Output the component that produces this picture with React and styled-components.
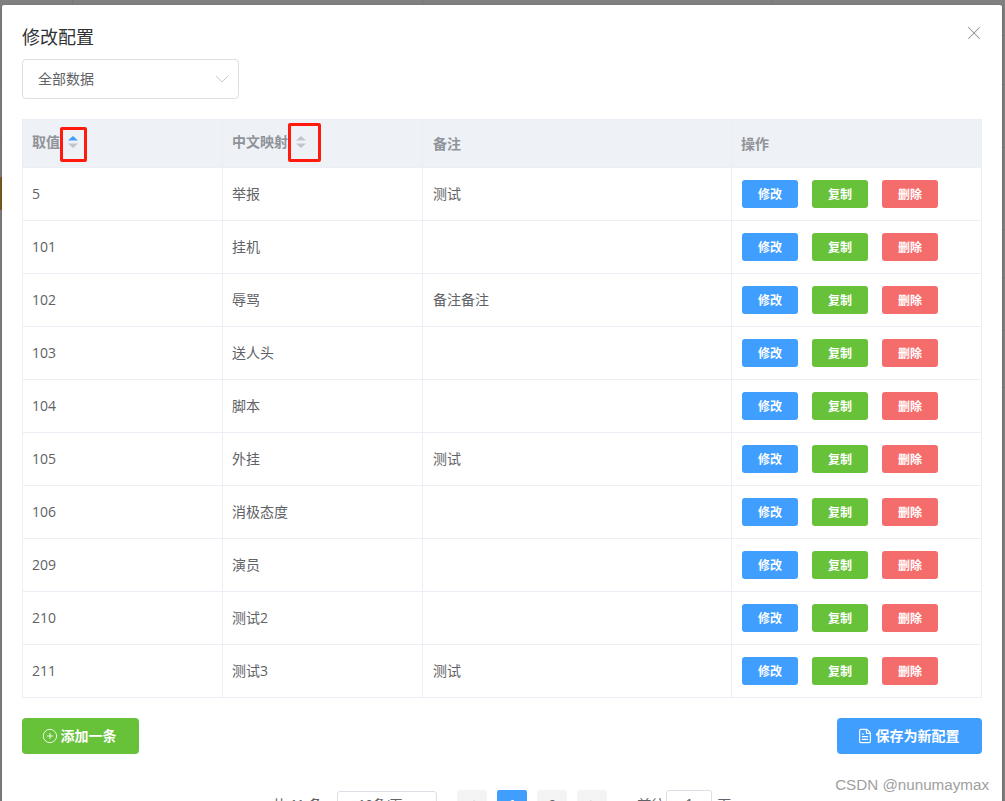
import React from "react";
import styled, { createGlobalStyle } from "styled-components";
import { X, ChevronDown, ChevronLeft, ChevronRight, CirclePlus, FileText } from "lucide-react";

const rows = [
  { value: "5", name: "举报", note: "测试" },
  { value: "101", name: "挂机", note: "" },
  { value: "102", name: "辱骂", note: "备注备注" },
  { value: "103", name: "送人头", note: "" },
  { value: "104", name: "脚本", note: "" },
  { value: "105", name: "外挂", note: "测试" },
  { value: "106", name: "消极态度", note: "" },
  { value: "209", name: "演员", note: "" },
  { value: "210", name: "测试2", note: "" },
  { value: "211", name: "测试3", note: "测试" },
];

// page behind the dimmed overlay only shows as thin lines around the dialog
const backdropLine = (x, y, w, h, color) =>
  `linear-gradient(${color}, ${color}) ${x}px ${y}px / ${w}px ${h}px no-repeat`;

const backdrop = [
  backdropLine(0, 177, 2, 33, "#7a5a20"),
  backdropLine(72, 0, 1, 5, "#75787c"),
  backdropLine(422, 0, 1, 5, "#75787c"),
  backdropLine(772, 0, 1, 5, "#75787c"),
  ...[35, 84, 147, 229, 277, 330, 387].map((y) => backdropLine(1002, y, 3, 1, "#797979")),
  ...[35, 84, 137].map((y) => backdropLine(0, y, 2, 1, "#797979")),
].join(", ");

const SortArrows = ({ active }) => (
  <svg width="10" height="12" viewBox="0 0 10 12">
    <path d="M5 0 L10 4.5 H0 Z" fill={active ? "#409eff" : "#c0c4cc"} />
    <path d="M0 7.5 H10 L5 12 Z" fill="#c0c4cc" />
  </svg>
);

const App = () => {
  return (
    <>
      <GlobalStyle />
      <Page>
        <Dialog>
          <Header>
            <Title>修改配置</Title>
            <Close>
              <X size={22} strokeWidth={1.1} />
            </Close>
          </Header>
          <Select>
            <span>全部数据</span>
            <ChevronDown size={24} strokeWidth={0.9} color="#c0c4cc" />
          </Select>
          <Table>
            <colgroup>
              <col width="200" />
              <col width="200" />
              <col width="309" />
              <col width="250" />
            </colgroup>
            <thead>
              <tr>
                <Th>
                  <HeadCell>
                    取值
                    <Marked $w={27} $h={35} $top={7} $padB={5} $padR={1}>
                      <SortArrows active />
                    </Marked>
                  </HeadCell>
                </Th>
                <Th>
                  <HeadCell>
                    中文映射
                    <Marked $w={33} $h={39} $top={3} $padB={1} $padR={7}>
                      <SortArrows />
                    </Marked>
                  </HeadCell>
                </Th>
                <Th>备注</Th>
                <Th>操作</Th>
              </tr>
            </thead>
            <tbody>
              {rows.map((row) => (
                <tr key={row.value}>
                  <Td>{row.value}</Td>
                  <Td>{row.name}</Td>
                  <Td>{row.note}</Td>
                  <Td>
                    <Actions>
                      <SmallButton $color="#409eff">修改</SmallButton>
                      <SmallButton $color="#67c23a">复制</SmallButton>
                      <SmallButton $color="#f56c6c">删除</SmallButton>
                    </Actions>
                  </Td>
                </tr>
              ))}
            </tbody>
          </Table>
          <FooterBar>
            <BigButton $color="#67c23a" $w={117}>
              <CirclePlus size={16} strokeWidth={1.3} />
              添加一条
            </BigButton>
            <BigButton $color="#409eff" $w={145}>
              <FileText size={16} strokeWidth={1.7} />
              保存为新配置
            </BigButton>
          </FooterBar>
          <Pagination>
            <PagerText>共 11 条</PagerText>
            <SizeSelect>10条/页</SizeSelect>
            <Pages>
              <PageBtn>
                <ChevronLeft size={13} />
              </PageBtn>
              <PageBtn $active>1</PageBtn>
              <PageBtn>2</PageBtn>
              <PageBtn>
                <ChevronRight size={13} />
              </PageBtn>
            </Pages>
            <PagerText>前往</PagerText>
            <JumpInput>1</JumpInput>
            <PagerText>页</PagerText>
          </Pagination>
        </Dialog>
        <Watermark>CSDN @nunumaymax</Watermark>
      </Page>
    </>
  );
};

export default App;

const GlobalStyle = createGlobalStyle`
  html, body {
    margin: 0;
    height: 100%;
    overflow: hidden;
    background: #808080;
  }
  * {
    box-sizing: border-box;
  }
`;

const Page = styled.div`
  position: relative;
  height: 801px;
  overflow: hidden;
  padding: 5px 0 0 2px;
  background: ${backdrop}, #808080;
  font-family: "Liberation Sans", "Noto Sans CJK SC", sans-serif;
`;

const Dialog = styled.div`
  width: 1000px;
  height: 860px;
  padding: 0 20px;
  background: #fff;
  border-radius: 2px;
  box-shadow: 0 1px 3px rgba(0, 0, 0, 0.3);
`;

const Header = styled.div`
  display: flex;
  align-items: center;
  justify-content: space-between;
  height: 54px;
  padding-top: 12px;
`;

const Title = styled.div`
  font-size: 18px;
  line-height: 24px;
  color: #303133;
`;

const Close = styled.div`
  display: flex;
  margin: -10px -3px 0 0;
  color: #909399;
`;

const Select = styled.div`
  display: flex;
  align-items: center;
  justify-content: space-between;
  width: 217px;
  height: 40px;
  padding: 0 4px 0 15px;
  border: 1px solid #dcdfe6;
  border-radius: 4px;
  font-size: 14px;
  color: #606266;

  span {
    margin-bottom: 2px;
  }
`;

const Table = styled.table`
  width: 959px;
  margin-top: 20px;
  table-layout: fixed;
  border-collapse: collapse;
  font-family: "Open Sans", "Noto Sans CJK SC", sans-serif;
  font-size: 14px;
  color: #606266;
`;

const Th = styled.th`
  height: 48px;
  padding: 0 10px 2px 9px;
  text-align: left;
  font-weight: 700;
  color: #909399;
  background: #eef1f6;
  border: 1px solid #ebeef5;

  &:nth-child(3) {
    padding-left: 10px;
  }
`;

const HeadCell = styled.div`
  display: flex;
  align-items: center;
  margin-top: -3px;
`;

// red annotation box drawn on the screenshot around the sort arrows
const Marked = styled.span`
  display: inline-flex;
  align-items: center;
  justify-content: center;
  width: ${(p) => p.$w}px;
  height: ${(p) => p.$h}px;
  margin-top: ${(p) => p.$top}px;
  padding: 0 ${(p) => p.$padR}px ${(p) => p.$padB}px 0;
  border: 3px solid #ff1a0d;
  border-radius: 2px;
`;

const Td = styled.td`
  height: 53px;
  padding: 0 10px 2px 9px;
  border: 1px solid #ebeef5;

  &:nth-child(3) {
    padding-left: 10px;
  }
`;

const Actions = styled.div`
  display: flex;
  gap: 14px;
  margin-left: 1px;
  padding-top: 2px;
`;

const SmallButton = styled.button`
  width: 56px;
  height: 28px;
  padding: 0 0 2px;
  border: 0;
  border-radius: 3px;
  font: 700 12px "Liberation Sans", "Noto Sans CJK SC", sans-serif;
  color: #fff;
  background: ${(p) => p.$color};
`;

const FooterBar = styled.div`
  display: flex;
  justify-content: space-between;
  margin-top: 20px;
`;

const BigButton = styled.button`
  display: flex;
  align-items: center;
  justify-content: center;
  gap: 3px;
  width: ${(p) => p.$w}px;
  height: 36px;
  padding: 0 3px 2px 0;
  border: 0;
  border-radius: 4px;
  font: 700 14px "Liberation Sans", "Noto Sans CJK SC", sans-serif;
  color: #fff;
  background: ${(p) => p.$color};

  svg {
    margin-top: 2px;
  }
`;

const Pagination = styled.div`
  display: flex;
  align-items: center;
  height: 28px;
  margin-top: 36px;
  padding-left: 250px;
  font-size: 14px;
  color: #606266;
`;

const PagerText = styled.span`
  white-space: nowrap;
`;

const SizeSelect = styled.div`
  width: 100px;
  height: 28px;
  margin: 2px 20px 0 15px;
  padding-left: 20px;
  line-height: 26px;
  border: 1px solid #dcdfe6;
  border-radius: 3px;
  font-size: 13px;
`;

const Pages = styled.div`
  display: flex;
  gap: 10px;
  margin-right: 30px;
`;

const PageBtn = styled.div`
  display: flex;
  align-items: center;
  justify-content: center;
  width: 30px;
  height: 28px;
  border-radius: 2px;
  font-size: 13px;
  font-weight: 700;
  color: ${(p) => (p.$active ? "#fff" : "#606266")};
  background: ${(p) => (p.$active ? "#409eff" : "#f4f4f5")};
`;

const JumpInput = styled.div`
  width: 46px;
  height: 28px;
  margin: 0 5px 0 1px;
  text-align: center;
  line-height: 26px;
  border: 1px solid #dcdfe6;
  border-radius: 3px;
`;

const Watermark = styled.div`
  position: absolute;
  right: 16px;
  bottom: 8px;
  font-size: 15.2px;
  color: #a0a0a0;
`;
